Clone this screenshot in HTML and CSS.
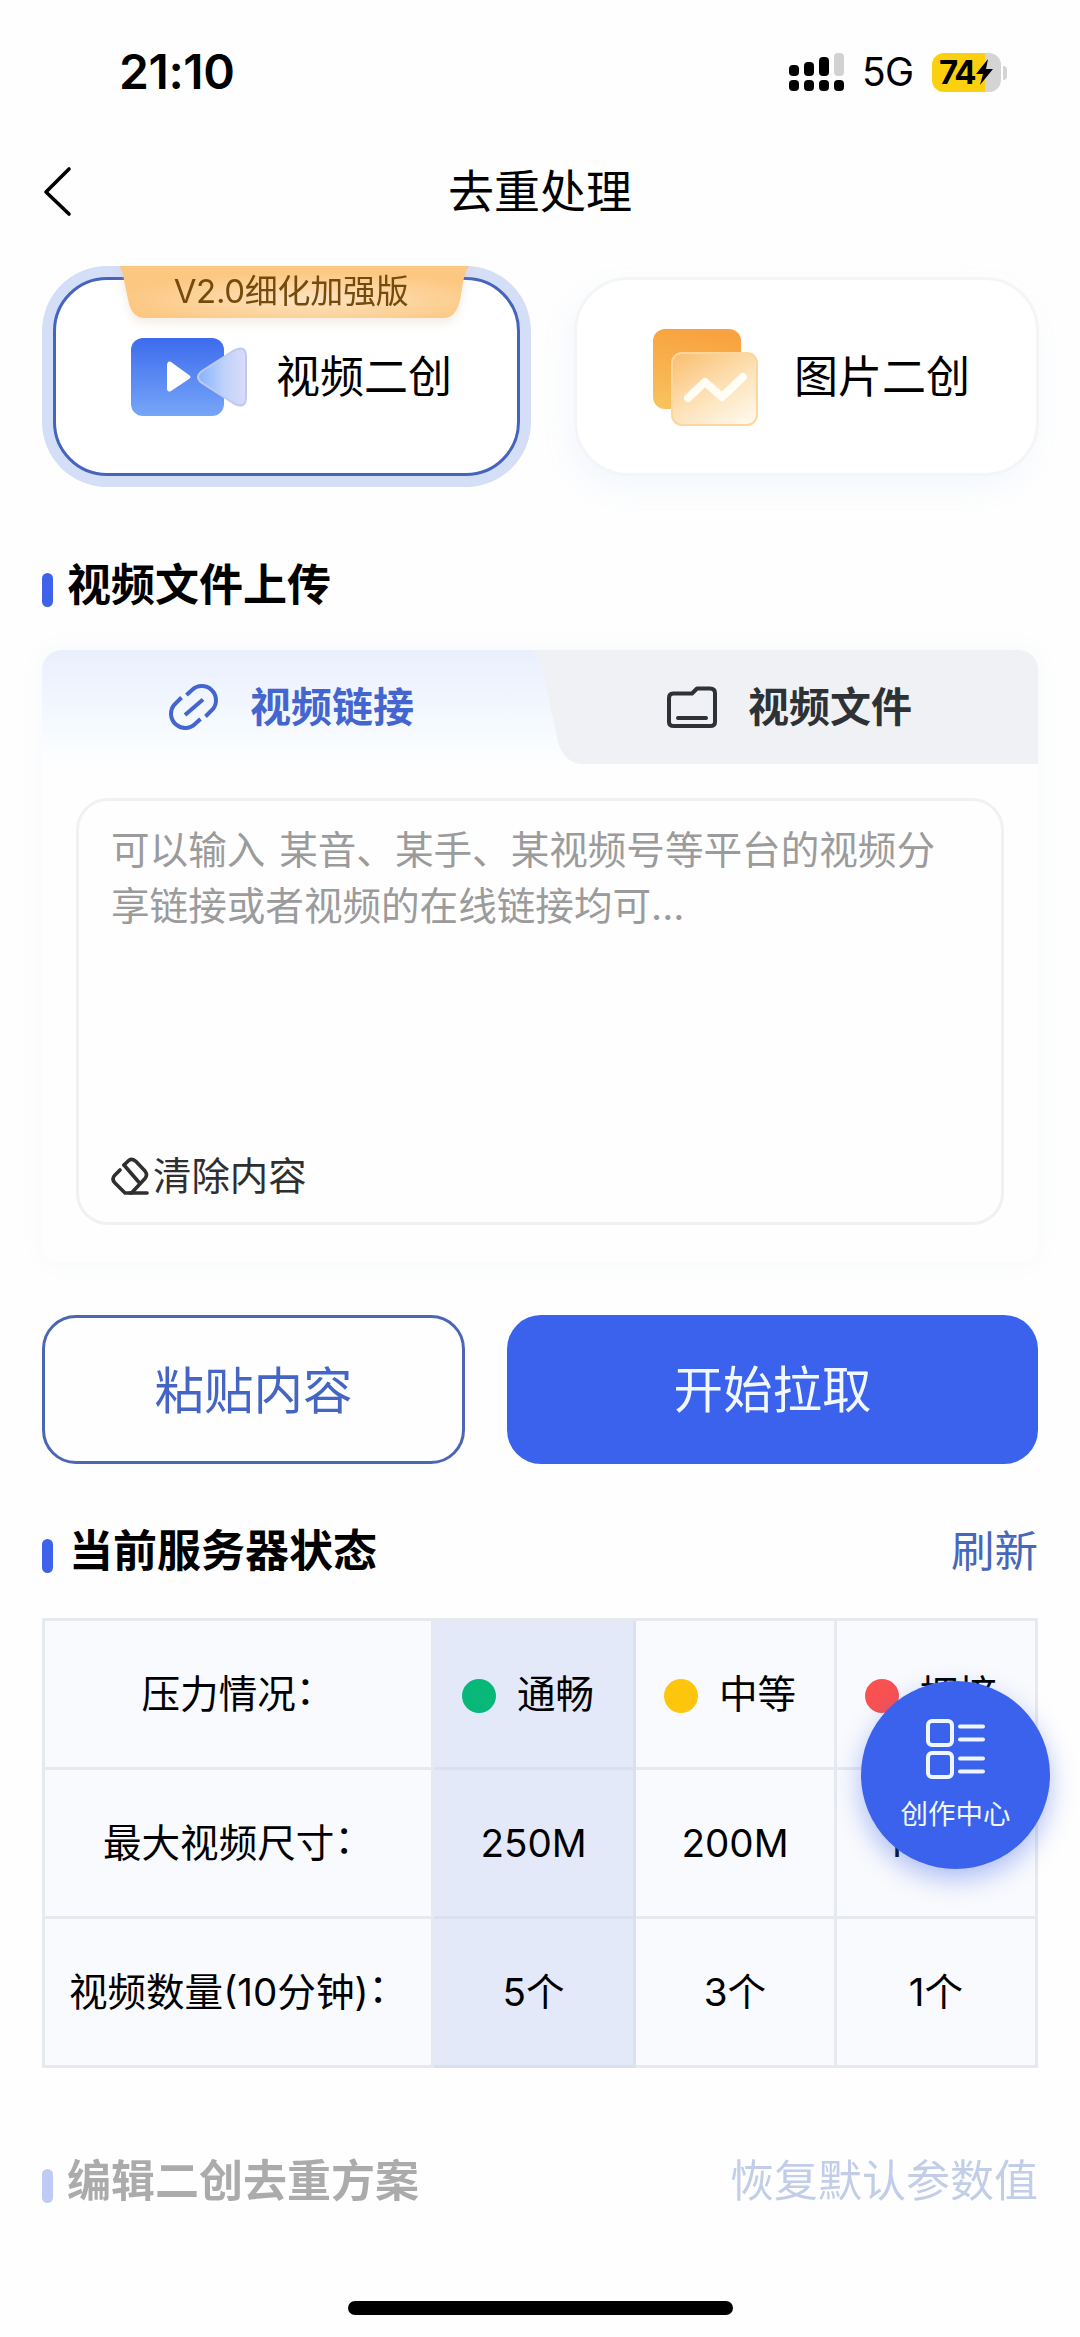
FILE: index.html
```html
<!DOCTYPE html>
<html lang="zh-CN">
<head>
<meta charset="utf-8">
<title>去重处理</title>
<link rel="stylesheet" href="styles.css">
</head>
<body>
<div class="screen">
  <header class="status">
    <span class="time">21:10</span>
    <div class="status-right">
      <svg class="signal" width="56" height="38" viewBox="0 0 56 38">
        <g fill="#000"><rect x="0" y="12" width="10" height="11" rx="4"/><rect x="15" y="9" width="10" height="14" rx="4"/><rect x="30" y="4" width="10" height="19" rx="4"/><rect x="0" y="27" width="10" height="11" rx="4"/><rect x="15" y="27" width="10" height="11" rx="4"/><rect x="30" y="27" width="10" height="11" rx="4"/><rect x="45" y="27" width="10" height="11" rx="4"/></g>
        <rect x="45" y="0" width="10" height="23" rx="4" fill="#d2d2d2"/>
      </svg>
      <span class="network">5G</span>
      <div class="battery">
        <span>74</span>
        <svg width="17" height="26" viewBox="0 0 17 26"><path d="M12 0 0 15h7L4 26 17 10h-7z" fill="#000"/></svg>
      </div>
    </div>
  </header>

  <nav class="nav">
    <svg class="back" width="32" height="52" viewBox="0 0 32 52"><path d="M29 4 6 27l23 22" fill="none" stroke="#000" stroke-width="3.6" stroke-linecap="round" stroke-linejoin="round"/></svg>
    <h1>去重处理</h1>
  </nav>

  <main>
    <div class="modes">
      <div class="mode mode-active">
        <div class="ribbon">
          <svg class="ribbon-shape" width="350" height="52" viewBox="0 0 350 52">
            <defs><radialGradient id="rib" cx=".55" cy=".65" r=".55"><stop offset="0" stop-color="#fde3c0"/><stop offset="1" stop-color="#fcc780"/></radialGradient></defs>
            <path d="M0 0H350C344 8 344 20 341 34Q337 52 324 52H26Q14 52 10 38L5 14Q4 5 0 0Z" fill="url(#rib)"/>
          </svg>
          <span>V2.0细化加强版</span>
        </div>
        <svg width="117" height="80" viewBox="0 0 117 80">
          <defs>
            <linearGradient id="cam" x1="0" y1="0" x2="0" y2="1"><stop offset="0" stop-color="#3d6bee"/><stop offset="1" stop-color="#76a6f8"/></linearGradient>
            <linearGradient id="lens" x1="0" y1="0" x2="1" y2="0"><stop offset="0" stop-color="#85b2fc"/><stop offset=".55" stop-color="#bfd2fa"/><stop offset="1" stop-color="#d9dcf8"/></linearGradient>
          </defs>
          <rect x="0" y="1" width="93" height="78" rx="12" fill="url(#cam)"/>
          <path d="M36 29v22q0 5 4 3l18-12q3-2 0-4L40 25q-4-2-4 4z" fill="#fff"/>
          <path d="M71 34 102 14Q115 7 115 20V60Q115 73 102 66L71 46Q63 40 71 34Z" fill="url(#lens)" stroke="#c0c8f2" stroke-width="2"/>
        </svg>
        <span class="mode-name">视频二创</span>
      </div>
      <div class="mode mode-image">
        <svg width="106" height="98" viewBox="0 0 106 98">
          <defs>
            <linearGradient id="pic" x1=".4" y1="0" x2=".2" y2="1"><stop offset="0" stop-color="#f9a23f"/><stop offset="1" stop-color="#f7c35e"/></linearGradient>
            <linearGradient id="glass" x1=".1" y1="0" x2=".8" y2="1"><stop offset="0" stop-color="#fac073"/><stop offset=".55" stop-color="#fde2b8"/><stop offset="1" stop-color="#fff7e9"/></linearGradient>
          </defs>
          <rect x="0" y="1" width="88" height="80" rx="12" fill="url(#pic)"/>
          <rect x="19" y="25" width="85" height="72" rx="10" fill="url(#glass)" stroke="#fbd69d" stroke-width="2"/>
          <path d="M35 70 52 54 69 69 90 49" fill="none" stroke="#fffdf4" stroke-width="8" stroke-linecap="round" stroke-linejoin="round"/>
        </svg>
        <span class="mode-name">图片二创</span>
      </div>
    </div>

    <div class="heading heading-upload"><h2>视频文件上传</h2></div>

    <section class="upload">
      <div class="tabs">
        <div class="tab tab-link">
          <svg width="50" height="46" viewBox="0 0 50 46"><g fill="none" stroke="#4465cf" stroke-width="4"><path d="M17.5 11 23 6A14.2 14.2 0 0 1 44 25L36.500 32.500"/><path d="M31.500 35 26 40A14.200 14.200 0 0 1 5 21L12.500 13.500"/><path d="M16 31 34 15.500"/></g></svg>
          <span>视频链接</span>
        </div>
        <div class="tab tab-file">
          <svg class="tab-shape" width="506" height="114" viewBox="0 0 506 114"><path d="M0 0H488Q506 2 506 20V114H48Q31 111 26 92L15 40Q11 12 0 0Z" fill="#eff1f4"/></svg>
          <svg width="50" height="42" viewBox="0 0 50 42"><g fill="none" stroke="#2e3135" stroke-width="4" stroke-linecap="round" stroke-linejoin="round"><path d="M6 7.500H25L30 2.500H43Q48 2.500 48 7V36Q48 40 43 40H7Q2 40 2 36V12Q2 7.500 6 7.500Z"/><path d="M11 32H39"/></g></svg>
          <span>视频文件</span>
        </div>
      </div>
      <div class="upload-body">
        <div class="input">
          <p>可以输入 某音、某手、某视频号等平台的视频分享链接或者视频的在线链接均可...</p>
          <div class="clear">
            <svg width="38" height="38" viewBox="0 0 38 38"><g fill="none" stroke="#2f2f2f" stroke-width="3.600" stroke-linecap="round" stroke-linejoin="round"><path d="M13 8 18 3.200Q21.500 1 25 4.500L34 14Q37 18 34 21.500L20.500 36H14L4 26Q0 22 4 18L9 13"/><path d="M13 8 28.500 26M19 36H36"/></g></svg>
            <span>清除内容</span>
          </div>
        </div>
      </div>
    </section>

    <div class="actions">
      <div class="btn btn-paste">粘贴内容</div>
      <div class="btn btn-start">开始拉取</div>
    </div>

    <div class="heading heading-server"><h2>当前服务器状态</h2><span class="heading-link">刷新</span></div>

    <div class="grid">
      <div class="cell">压力情况<i class="colon">：</i></div>
      <div class="cell level current"><b class="dot green"></b>通畅</div>
      <div class="cell level"><b class="dot yellow"></b>中等</div>
      <div class="cell level"><b class="dot red"></b>拥挤</div>
      <div class="cell">最大视频尺寸<i class="colon">：</i></div>
      <div class="cell current">250M</div>
      <div class="cell">200M</div>
      <div class="cell">100M</div>
      <div class="cell">视频数量(10分钟)<i class="colon">：</i></div>
      <div class="cell current">5个</div>
      <div class="cell">3个</div>
      <div class="cell">1个</div>
    </div>

    <div class="heading heading-plan"><h2>编辑二创去重方案</h2><span class="heading-link">恢复默认参数值</span></div>
  </main>

  <div class="fab">
    <svg width="60" height="60" viewBox="0 0 60 60"><g fill="none" stroke="#eef6ff" stroke-width="4" stroke-linecap="round"><rect x="2" y="2" width="24" height="24" rx="4"/><rect x="2" y="34" width="24" height="24" rx="4"/><path d="M34 7.500H57M34 20.500H57M34 39.500H57M34 52.500H57"/></g></svg>
    <span>创作中心</span>
  </div>
  <div class="home"></div>
</div>
</body>
</html>
```
FILE: styles.css
```css
* { box-sizing: border-box; }
body {
  margin: 0;
  background: #fefefe;
  color: #000;
  font-family: Inter, "Noto Sans CJK SC", sans-serif;
}
svg { display: block; flex: none; }
h1, h2, p { margin: 0; }
.screen { position: relative; width: 1080px; height: 2337px; overflow: hidden; }

.status { height: 144px; padding: 0 79px 0 119px; display: flex; align-items: center; justify-content: space-between; }
.time { font-size: 48px; font-weight: 600; line-height: 60px; letter-spacing: -.4px; }
.status-right { display: flex; align-items: center; }
.network { margin-left: 17px; font-size: 39px; line-height: 48px; width: 70px; letter-spacing: -.6px; }
.battery {
  position: relative;
  width: 69px; height: 39px;
  display: flex; align-items: center; gap: 1px;
  padding-left: 7px;
  border-radius: 12px;
  background: linear-gradient(90deg, #fbd00e 53px, #d4d4d4 53px);
  font-size: 33px; font-weight: 700; letter-spacing: -2px;
}
.battery::after {
  content: ""; position: absolute; left: 71px; top: 13px;
  width: 4px; height: 14px; border-radius: 0 4px 4px 0; background: #d4d4d4;
}

.nav { height: 94px; padding: 0 40px; display: grid; grid-template-columns: 100px 1fr 100px; align-items: center; }
h1 { font-size: 46px; font-weight: 400; line-height: 60px; text-align: center; }

main { padding: 39px 42px 0; }
.modes { display: grid; grid-template-columns: 467px 465px; justify-content: space-between; margin-left: 11px; width: 986px; }
.mode { position: relative; height: 199px; display: flex; align-items: center; border-radius: 54px; background: #fff; }
.mode-active { padding-left: 75px; border: 3px solid #4564bd; box-shadow: 0 0 0 11px #d5def7; }
.mode-active .mode-name { margin-left: 28px; }
.mode-image { padding-left: 76px; border: 3px solid #f4f5f7; box-shadow: -6px 12px 28px rgba(110, 160, 240, .08); }
.mode-image .mode-name { margin-left: 35px; }
.mode-name { font-size: 44px; line-height: 60px; }
.ribbon {
  position: absolute; left: 63px; top: -14px;
  width: 350px; height: 52px;
  display: flex; align-items: center; justify-content: center;
  color: #754b0d; font-size: 33px; line-height: 48px;
  filter: drop-shadow(0 5px 5px rgba(200, 170, 130, .22));
}
.ribbon-shape { position: absolute; inset: 0; }
.ribbon span { position: relative; padding: 0 6px 3px 0; letter-spacing: -.3px; }

.heading { height: 60px; display: flex; align-items: center; }
.heading::before { content: ""; width: 11px; height: 34px; border-radius: 6px; margin: 9px 14px 0 0; background: #3e62ea; }
h2 { font-size: 44px; font-weight: 700; line-height: 60px; }
.heading-link { margin-left: auto; color: #4767bb; font-size: 43.500px; line-height: 60px; }
.heading-upload { margin-top: 79px; }
.heading-server { margin-top: 57px; }
.heading-server h2 { padding-left: 2px; }
.heading-plan { margin-top: 83px; opacity: .32; }
.heading-plan .heading-link { font-size: 44px; }

.upload { margin-top: 35px; border-radius: 20px; background: #fefefe; box-shadow: 0 0 22px rgba(120, 160, 210, .06); }
.tabs { height: 114px; display: grid; grid-template-columns: 490px 506px; border-radius: 20px 20px 0 0; overflow: hidden; background: linear-gradient(180deg, #e9effd, #f4f9ff 60%, #fefefe); }
.tab { display: flex; align-items: center; font-size: 41px; font-weight: 700; line-height: 56px; }
.tab-link { padding-left: 127px; color: #4465cf; }
.tab-link span { margin-left: 31px; }
.tab-file { position: relative; padding-left: 135px; color: #2e3135; }
.tab-file > * { position: relative; }
.tab-file .tab-shape { position: absolute; inset: 0; }
.tab-file span { margin-left: 31px; }
.upload-body { padding: 34px 34px 37px; }
.input { height: 427px; padding: 22px 32px 18px; display: flex; flex-direction: column; justify-content: space-between; border: 3px solid #f1f1f0; border-radius: 32px; }
.input p { width: 840px; font-size: 38.600px; line-height: 55.500px; color: #9b9b9b; word-spacing: 3px; }
.clear { display: flex; align-items: center; gap: 4px; font-size: 38.400px; line-height: 56px; color: #2f2f2f; }

.actions { margin-top: 53px; display: grid; grid-template-columns: 423px 1fr; gap: 42px; }
.btn { height: 149px; display: flex; align-items: center; justify-content: center; border-radius: 34px; font-size: 49.500px; line-height: 64px; }
.btn-paste { border: 3px solid #4b67b4; color: #4465c6; padding-top: 3px; }
.btn-start { background: #3a62ec; color: #f2f8ff; }

.grid { margin-top: 37px; height: 450px; display: grid; grid-template-columns: 389px 202px 201px 1fr; grid-template-rows: repeat(3, 1fr); border: solid #e6e9ee; border-width: 3px 0 0 3px; background: #f9fafd; }
.cell { display: flex; align-items: center; justify-content: center; border: solid #e6e9ee; border-width: 0 3px 3px 0; font-size: 38.600px; line-height: 52px; }
.current { background: #e4e9fa; border-color: #dae0f0; }
.colon { font-style: normal; padding-bottom: 8px; }
.level { justify-content: flex-start; padding-left: 28px; }
.dot { width: 34px; height: 34px; border-radius: 50%; margin: 4px 21px 0 0; }
.green { background: #07b878; }
.yellow { background: #fdc50b; }
.red { background: #fa5151; }

.fab {
  position: absolute; left: 861px; top: 1681px;
  width: 189px; height: 188px; padding-top: 38px;
  display: flex; flex-direction: column; align-items: center;
  border-radius: 50%; background: #3a62ec; color: #f2f8ff;
  box-shadow: 0 10px 26px rgba(58, 98, 236, .4);
}
.fab span { margin-top: 15px; font-size: 27.500px; line-height: 40px; }
.home { position: absolute; left: 348px; top: 2301px; width: 385px; height: 14px; border-radius: 7px; background: #000; }
```
